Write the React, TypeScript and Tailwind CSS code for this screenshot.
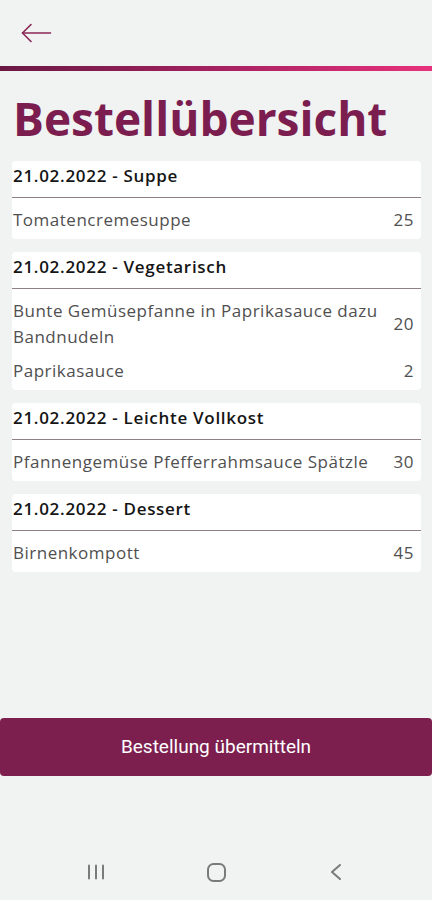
import React from 'react';

type Item = { name: string; qty: number };
type Group = { title: string; items: Item[] };

const groups: Group[] = [
  { title: '21.02.2022 - Suppe', items: [{ name: 'Tomatencremesuppe', qty: 25 }] },
  {
    title: '21.02.2022 - Vegetarisch',
    items: [
      { name: 'Bunte Gemüsepfanne in Paprikasauce dazu Bandnudeln', qty: 20 },
      { name: 'Paprikasauce', qty: 2 },
    ],
  },
  {
    title: '21.02.2022 - Leichte Vollkost',
    items: [{ name: 'Pfannengemüse Pfefferrahmsauce Spätzle', qty: 30 }],
  },
  { title: '21.02.2022 - Dessert', items: [{ name: 'Birnenkompott', qty: 45 }] },
];

function GroupCard({ group }: { group: Group }) {
  return (
    <div className="bg-white rounded-[4px]">
      {/* Group header */}
      <div className="pl-[1px] pt-[3px] pb-[9px] text-[17px] leading-[24px] font-semibold tracking-[0.7px] text-[#151515]">
        {group.title}
      </div>
      <div className="h-px bg-[#8f7f86]" />
      {/* Items */}
      <div className="pt-[5px] pb-[2px]">
        {group.items.map((item) => (
          <div key={item.name} className="flex items-center py-[4px] pl-[1px] pr-[7px]">
            <div className="flex-1 text-[17px] leading-[26px] tracking-[0.5px] text-[#505050] pr-[6px]">{item.name}</div>
            <div className="text-[17px] leading-[26px] tracking-[0.5px] text-[#505050]">{item.qty}</div>
          </div>
        ))}
      </div>
    </div>
  );
}

export default function App() {
  return (
    <div
      className="h-[900px] w-[432px] flex flex-col bg-[#f1f2f2] overflow-hidden"
      style={{ fontFamily: '"Open Sans", "Noto Sans", sans-serif' }}
    >
      {/* Top bar */}
      <div className="h-[66px] flex items-center pl-[21px]">
        <svg width="31" height="20" viewBox="0 0 31 20" fill="none" stroke="#8a2656" strokeWidth="1.6" strokeLinecap="round" strokeLinejoin="round">
          <path d="M1.5 10 H29.5" />
          <path d="M10 1.5 L1.5 10 L10 18.5" />
        </svg>
      </div>
      <div className="h-[5px] bg-gradient-to-r from-[#6a1843] via-[#a52160] to-[#e8317c]" />

      {/* Title */}
      <h1 className="pt-[19px] pb-[15px] pl-[13px] text-[46px] leading-[56px] font-bold text-[#7b1d4f]">
        Bestellübersicht
      </h1>

      {/* Groups */}
      <div className="flex flex-col gap-[13px] pl-[12px] pr-[11px]">
        {groups.map((g) => (
          <GroupCard key={g.title} group={g} />
        ))}
      </div>

      <div className="flex-1" />

      {/* Submit button */}
      <button
        className="h-[58px] w-full rounded-[4px] bg-[#7c1f4f] text-white text-[19px]"
        style={{ fontFamily: 'Roboto, "Noto Sans", sans-serif' }}
      >
        Bestellung übermitteln
      </button>

      <div className="h-[72px]" />

      {/* Android nav bar */}
      <div className="h-[52px] flex items-center gap-[80px] pl-[76px] pb-[4px]">
        <div className="w-[40px] flex justify-center">
          <svg width="20" height="16" viewBox="0 0 20 16" fill="none" stroke="#7a7a7a" strokeWidth="2" strokeLinecap="round">
            <path d="M3 1.5 V14.5" />
            <path d="M10 1.5 V14.5" />
            <path d="M17 1.5 V14.5" />
          </svg>
        </div>
        <div className="w-[40px] flex justify-center">
          <svg width="21" height="21" viewBox="0 0 21 21" fill="none" stroke="#7a7a7a" strokeWidth="2">
            <rect x="2" y="2" width="17" height="17" rx="5.5" />
          </svg>
        </div>
        <div className="w-[40px] flex justify-center">
          <svg width="12" height="18" viewBox="0 0 12 18" fill="none" stroke="#7a7a7a" strokeWidth="2" strokeLinecap="round" strokeLinejoin="round">
            <path d="M10 2 L2 9 L10 16" />
          </svg>
        </div>
      </div>
    </div>
  );
}
